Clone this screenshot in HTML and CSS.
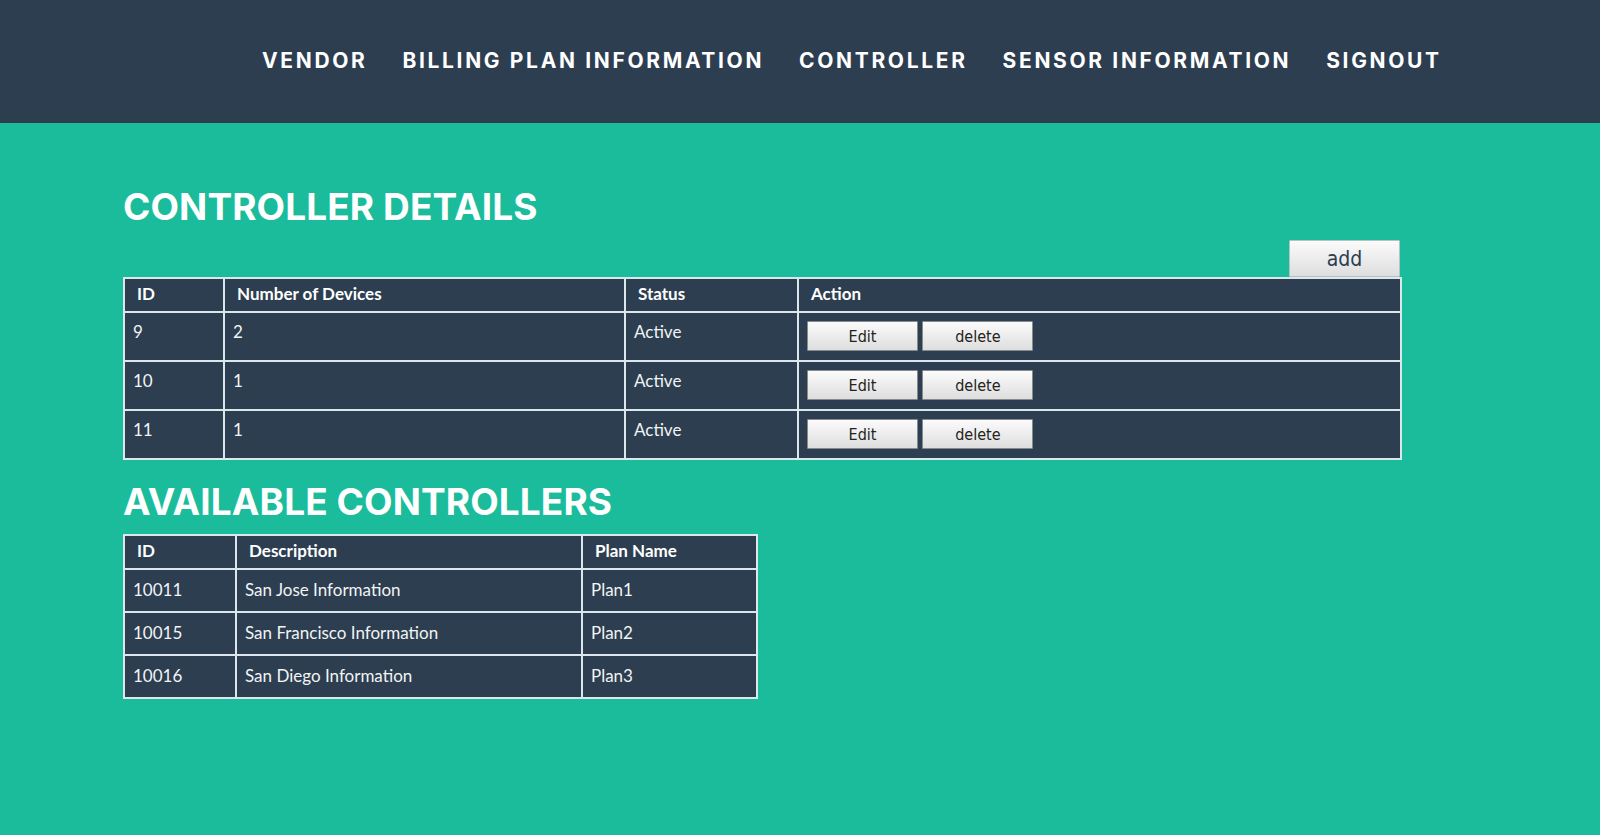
FILE: index.html
```html
<!DOCTYPE html>
<html lang="en">
<head>
<meta charset="utf-8">
<title>Controller Details</title>
<link rel="stylesheet" href="styles.css">
</head>
<body>
<header class="topbar">
  <nav class="nav">
    <a class="nav-link" href="#">VENDOR</a>
    <a class="nav-link" href="#">BILLING PLAN INFORMATION</a>
    <a class="nav-link" href="#">CONTROLLER</a>
    <a class="nav-link" href="#">SENSOR INFORMATION</a>
    <a class="nav-link" href="#">SIGNOUT</a>
  </nav>
</header>
<main class="content">
  <h1 class="section-title">CONTROLLER DETAILS</h1>
  <div class="toolbar">
    <button class="btn btn-add" type="button">add</button>
  </div>
  <table class="grid grid-details">
    <colgroup>
      <col class="c-id"><col class="c-num"><col class="c-status"><col class="c-action">
    </colgroup>
    <thead>
      <tr><th>ID</th><th>Number of Devices</th><th>Status</th><th>Action</th></tr>
    </thead>
    <tbody>
      <tr><td>9</td><td>2</td><td>Active</td><td class="actions"><button class="btn btn-row" type="button">Edit</button> <button class="btn btn-row" type="button">delete</button></td></tr>
      <tr><td>10</td><td>1</td><td>Active</td><td class="actions"><button class="btn btn-row" type="button">Edit</button> <button class="btn btn-row" type="button">delete</button></td></tr>
      <tr><td>11</td><td>1</td><td>Active</td><td class="actions"><button class="btn btn-row" type="button">Edit</button> <button class="btn btn-row" type="button">delete</button></td></tr>
    </tbody>
  </table>
  <h2 class="section-title section-title-2">AVAILABLE CONTROLLERS</h2>
  <table class="grid grid-available">
    <colgroup>
      <col class="a-id"><col class="a-desc"><col class="a-plan">
    </colgroup>
    <thead>
      <tr><th>ID</th><th>Description</th><th>Plan Name</th></tr>
    </thead>
    <tbody>
      <tr><td>10011</td><td>San Jose Information</td><td>Plan1</td></tr>
      <tr><td>10015</td><td>San Francisco Information</td><td>Plan2</td></tr>
      <tr><td>10016</td><td>San Diego Information</td><td>Plan3</td></tr>
    </tbody>
  </table>
</main>
</body>
</html>
```

FILE: styles.css
```css
* { box-sizing: border-box; }

html, body {
  margin: 0;
  padding: 0;
}

body {
  background: #1abc9c;
  font-family: Lato, "Open Sans", sans-serif;
  color: #ffffff;
  min-height: 835px;
}

.topbar {
  background: #2c3e50;
  height: 123px;
  display: flex;
  align-items: center;
  padding-left: 262px;
}

.nav {
  display: flex;
  gap: 35px;
  align-items: center;
}

.nav-link {
  color: #ffffff;
  text-decoration: none;
  font-family: Inter, "DejaVu Sans", sans-serif;
  font-weight: 700;
  font-size: 21px;
  letter-spacing: 2.65px;
  line-height: 24px;
  position: relative;
  top: -1px;
}

.content {
  padding-left: 123px;
  width: 1400px;
}

.section-title {
  margin: 65px 0 0 0;
  font-family: Inter, "DejaVu Sans", sans-serif;
  font-weight: 700;
  font-size: 37px;
  line-height: 37px;
  letter-spacing: 0.1px;
  color: #ffffff;
}

.section-title-2 {
  margin-top: 23px;
  margin-bottom: 14px;
}

.toolbar {
  display: flex;
  justify-content: flex-end;
  margin-top: 15px;
}

.btn {
  background: linear-gradient(#fbfbfb, #dedede);
  border: 1px solid #868b8e;
  border-radius: 1px;
  color: #222;
  font-family: "DejaVu Sans Condensed", "DejaVu Sans", sans-serif;
  font-stretch: condensed;
  padding: 0;
  cursor: pointer;
}

.btn-add {
  width: 111px;
  height: 37px;
  font-size: 21px;
  color: #2c3e50;
  border-color: #b7c2c4;
}

.btn-row {
  width: 111px;
  height: 30px;
  font-size: 16px;
}

.grid {
  border-collapse: collapse;
  table-layout: fixed;
  background: #2c3e50;
}

.grid th,
.grid td {
  border: 2px solid #dbe7ea;
  text-align: left;
  font-size: 17px;
  line-height: 20px;
}

.grid th {
  font-weight: 700;
  padding: 5px 12px 7px 12px;
}

.grid td {
  font-weight: 400;
  color: #f2f4f5;
}

.grid-details {
  width: 1277px;
}

.grid-details td {
  vertical-align: top;
  padding: 9px 8px 9px 8px;
}

.grid-details td.actions {
  padding: 8px 8px 9px 8px;
}

.c-id { width: 100px; }
.c-num { width: 401px; }
.c-status { width: 173px; }
.c-action { width: 603px; }

.grid-available {
  width: 633px;
}

.grid-available th {
  padding: 5px 12px 7px 12px;
}

.grid-available td {
  padding: 10px 8px 11px 8px;
}

.a-id { width: 112px; }
.a-desc { width: 346px; }
.a-plan { width: 175px; }
```
